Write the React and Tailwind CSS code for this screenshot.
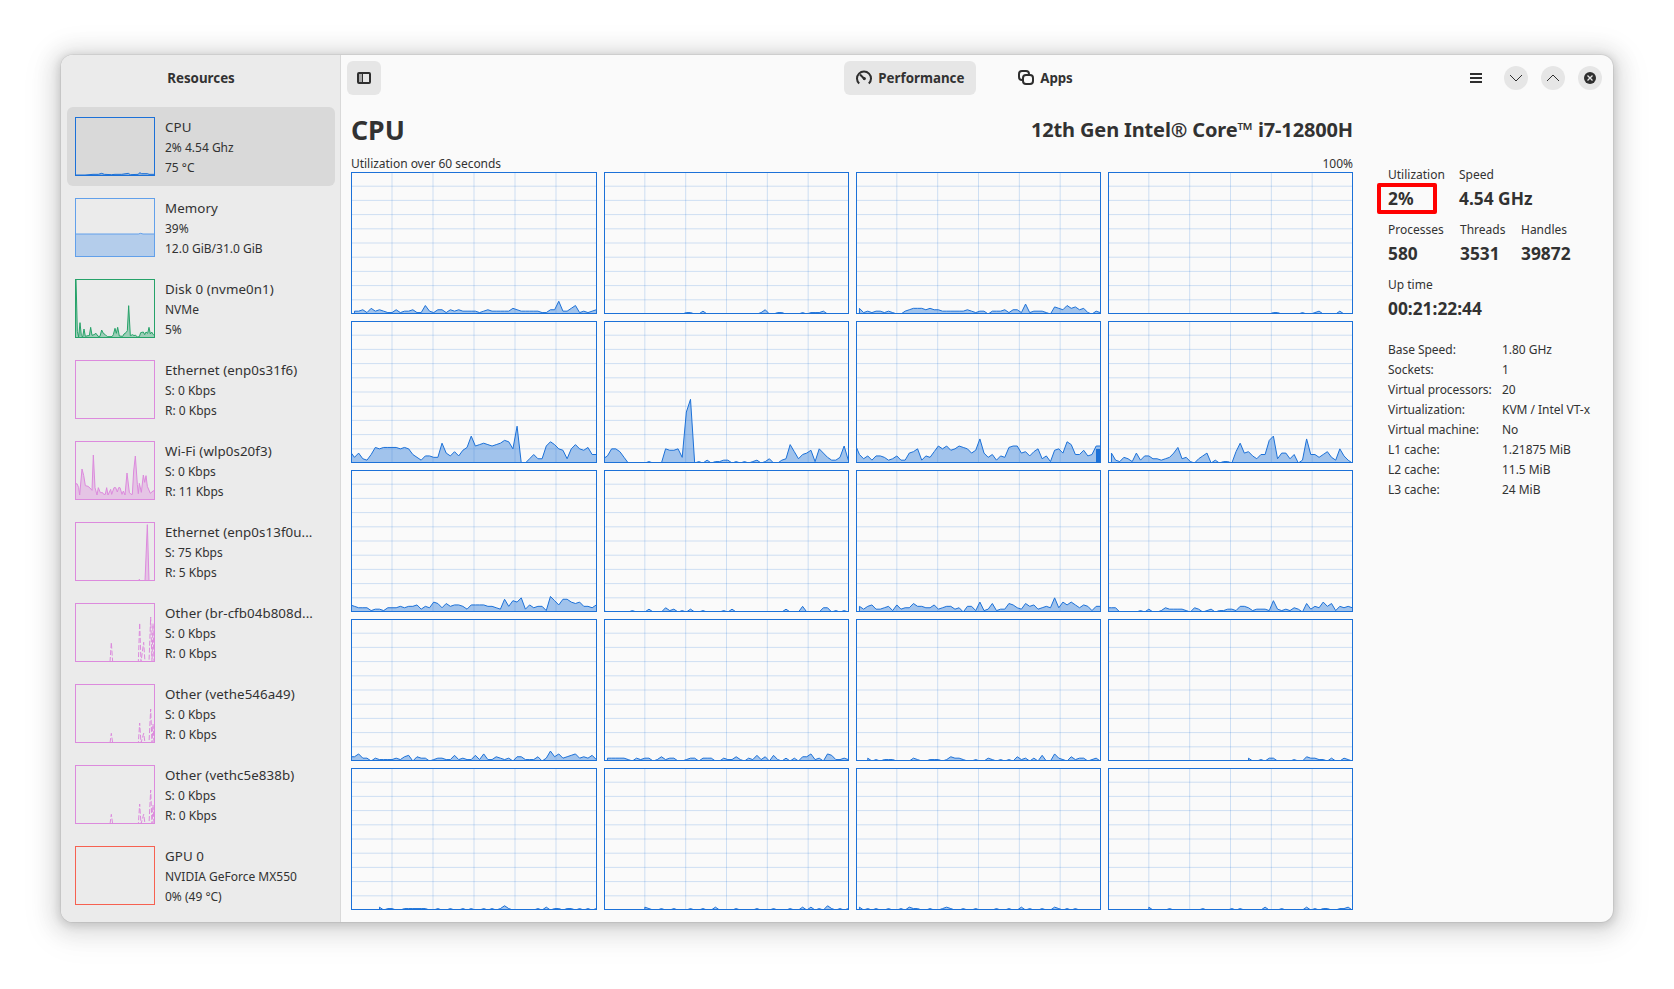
import React from "react";

const CORES = [
  [null,2,2,3,1,4,2,3,2,1,1,3,1,2,2,3,1,1,6,2,1,3,3,1,3,2,3,2,2,2,2,1,2,3,2,2,2,2,2,4,3,2,2,2,2,2,1,1,3,3,9,2,2,4,6,1,2,1,2,3],
  [0,0,0,0,0,0,0,0,0,0,0,0,0,0,0,0,0,0,0,0,1,1,0,0,2,0,0,0,0,0,0,0,0,0,0,0,0,0,1,3,0,0,1,1,0,0,0,0,1,0,1,1,1,2,0,0,0,0,0,0],
  [null,4,1,2,1,2,2,1,2,1,0,0,2,3,4,4,4,3,4,3,3,2,2,2,2,2,2,3,2,1,2,2,0,2,2,2,3,1,3,3,1,7,1,2,2,2,1,0,5,4,3,6,4,5,3,4,1,0,2,1],
  [0,0,0,0,0,0,0,0,0,0,0,0,0,0,0,0,0,0,0,0,0,0,0,0,0,0,0,0,0,0,0,0,0,0,0,0,0,0,0,0,1,1,0,0,0,0,0,1,0,0,1,2,0,0,0,0,2,0,0,0],
  [8,4,7,3,2,6,11,10,11,11,11,11,10,11,10,6,4,2,5,5,4,4,14,7,5,8,5,9,11,19,12,13,14,13,12,13,14,16,15,10,26,0,0,3,6,3,3,12,15,13,10,9,3,10,13,10,9,11,6,6],
  [3,5,10,10,8,4,0,0,0,0,0,1,0,0,0,10,9,9,10,4,36,45,0,1,0,2,0,1,1,2,2,0,1,0,1,0,1,2,0,1,3,0,0,2,3,13,8,3,6,7,9,1,10,7,4,2,2,4,12,2],
  [13,6,3,5,2,5,5,4,2,3,5,2,2,7,8,10,2,5,4,8,12,10,12,9,10,12,11,10,7,9,17,7,4,6,2,5,4,11,12,12,7,8,5,8,10,3,5,1,9,10,7,15,13,6,6,9,5,6,12,12],
  [null,7,2,1,4,3,1,7,2,5,5,3,3,2,3,4,7,11,3,4,1,0,3,5,7,0,2,0,1,1,0,8,14,7,8,5,3,6,6,16,19,3,7,7,3,6,0,2,17,6,6,4,6,8,4,2,10,5,2,0],
  [5,4,3,3,3,1,2,2,1,3,3,3,4,3,4,4,5,2,4,3,7,6,3,6,4,5,5,4,2,5,5,5,5,4,4,3,2,9,4,8,7,10,2,5,3,4,4,1,11,8,5,9,9,7,6,7,4,4,3,5],
  [1,0,0,0,0,0,0,1,0,0,0,2,0,0,0,3,1,2,0,1,0,2,0,0,1,0,0,0,0,1,0,2,0,0,0,0,0,0,0,0,0,0,0,0,2,0,0,0,4,0,0,0,0,3,3,0,1,0,1,0],
  [null,4,2,4,5,2,2,3,4,1,5,2,3,3,6,4,4,3,3,5,2,3,4,4,2,3,0,4,4,1,7,1,2,6,1,2,2,6,5,3,2,6,4,5,2,3,4,3,10,3,7,5,7,5,3,5,4,1,4,4],
  [3,3,3,0,0,0,0,0,1,0,2,0,0,1,3,2,2,2,2,1,0,3,2,0,1,2,0,1,1,2,2,1,4,4,3,1,2,2,2,1,8,2,1,2,1,3,2,0,6,2,4,3,7,4,6,1,4,3,4,3],
  [3,3,5,2,2,0,2,1,1,1,1,2,1,3,4,0,3,2,2,0,1,2,2,1,1,4,1,2,1,1,4,1,5,1,1,3,2,1,2,0,3,3,1,1,1,3,0,2,7,3,5,2,3,4,5,2,3,2,4,1],
  [null,2,2,2,2,2,1,0,2,1,2,2,0,1,3,1,2,2,0,0,1,2,2,0,2,2,2,0,0,2,1,1,3,1,0,2,1,4,1,3,0,4,1,0,2,0,2,0,3,3,5,1,2,0,5,4,1,1,2,1],
  [null,null,null,2,0,1,0,1,1,1,0,0,0,0,2,1,0,0,1,1,1,0,1,3,2,2,1,0,0,1,0,0,2,1,0,1,0,1,0,3,1,2,0,2,0,4,0,0,5,2,1,0,3,1,2,2,0,1,2,0],
  [...Array(34).fill(null),2,0,0,1,0,2,2,0,0,0,0,1,0,0,3,2,2,1,1,0,2,0,0,2,1,0],
  [...Array(7).fill(null),2,0,1,1,0,0,1,1,1,1,1,1,0,0,1,0,0,1,0,0,1,0,1,0,0,1,0,0,0,1,0,1,3,1,0,0,0,0,0,0,1,0,2,0,1,1,0,1,1,0,1,0,1].toSpliced(33, 2).concat([0,1]),
  [...Array(10).fill(null),2,1,0,0,1,0,0,1,0,0,0,1,0,0,1,0,0,2,0,0,0,0,1,0,0,0,0,1,0,0,0,1,0,0,0,1,0,0,2,0,2,0,1,0,3,1,0,1,0,1],
  [null,2,0,1,0,1,0,0,1,0,0,1,0,2,1,1,0,0,1,0,0,1,2,1,0,0,1,0,0,1,0,0,0,0,1,0,0,1,0,0,2,0,1,0,0,1,0,0,2,1,0,1,0,1,0,0,0,0,0,0],
  [...Array(10).fill(null),2,0,0,0,0,1,0,0,0,0,0,0,0,1,0,0,0,0,0,0,1,0,1,0,0,0,0,0,2,0,0,0,1,0,0,0,0,0,2,0,1,0,1,1,0,0,1,1,2,0],
];

const WIFI = "0,130 6,128 11,140 14,162 21,84 26,103 31,134 39,136 45,141 51,148 55,42 60,140 66,162 70,140 76,155 83,155 86,160 91,160 95,140 99,162 107,145 110,160 117,140 122,140 127,153 131,140 135,140 141,160 145,150 150,162 156,96 163,154 168,160 172,160 176,90 181,45 187,130 190,158 193,127 199,154 205,102 209,124 213,104 217,136 226,157 234,150 240,148";
const DISK = "0,0 3,0 7,157 11,174 15,131 19,170 23,174 27,150 31,172 39,170 43,170 47,145 51,169 57,167 63,163 69,172 75,172 80,153 85,163 91,167 97,173 111,173 115,167 120,148 124,163 128,145 133,171 143,172 147,165 153,161 157,155 161,80 166,170 173,167 177,170 181,168 187,174 193,173 197,161 205,159 209,167 213,159 218,163 222,145 226,165 230,159 235,167 240,169";
const USAGE = "0,174 30,174 54,172 70,172 80,169 88,172 110,173 120,172 140,172 160,169 166,173 190,172 194,167 200,170 218,170 222,172 240,172";
const BRIDGE = "105,177 109,118 113,177 190,177 194,60 198,177 206,118 210,177 222,177 227,42 231,177 234,62 237,177";
const VETH = "105,177 109,148 113,177 190,177 194,117 198,177 206,148 210,177 222,177 227,75 231,177 234,120 237,177";

const DEVICES = [
  { name: "CPU", lines: ["2% 4.54 Ghz", "75 °C"], color: "#1c71d8", points: USAGE, selected: true },
  { name: "Memory", lines: ["39%", "12.0 GiB/31.0 GiB"], color: "#62a0ea", points: "0,108 190,108 197,106 204,108 240,108" },
  { name: "Disk 0 (nvme0n1)", lines: ["NVMe", "5%"], color: "#26a269", points: DISK },
  { name: "Ethernet (enp0s31f6)", lines: ["S: 0 Kbps", "R: 0 Kbps"], color: "#dc8add" },
  { name: "Wi-Fi (wlp0s20f3)", lines: ["S: 0 Kbps", "R: 11 Kbps"], color: "#dc8add", points: WIFI },
  { name: "Ethernet (enp0s13f0u...", lines: ["S: 75 Kbps", "R: 5 Kbps"], color: "#dc8add", points: "189,177 193,172 197,177 210,177 217,8 222,177" },
  { name: "Other (br-cfb04b808d...", lines: ["S: 0 Kbps", "R: 0 Kbps"], color: "#dc8add", points: BRIDGE, dashed: true },
  { name: "Other (vethe546a49)", lines: ["S: 0 Kbps", "R: 0 Kbps"], color: "#dc8add", points: VETH, dashed: true },
  { name: "Other (vethc5e838b)", lines: ["S: 0 Kbps", "R: 0 Kbps"], color: "#dc8add", points: VETH, dashed: true },
  { name: "GPU 0", lines: ["NVIDIA GeForce MX550", "0% (49 °C)"], color: "#f66151" },
];

function Thumbnail({ color, points, dashed }) {
  return (
    <svg className="h-[59px] w-20 shrink-0" viewBox="0 0 240 177">
      {points && !dashed && (
        <polygon points={`${points.split(" ")[0].split(",")[0]},177 ${points} ${points.split(" ").at(-1).split(",")[0]},177`} fill={color} fillOpacity="0.4" />
      )}
      {points && (
        <polyline points={points} fill="none" stroke={color} strokeWidth="3" strokeDasharray={dashed ? "15 6" : undefined} />
      )}
      <rect x="1.5" y="1.5" width="237" height="174" fill="none" stroke={color} strokeWidth="3" />
    </svg>
  );
}

function Device({ device }) {
  return (
    <li className={`flex h-[79px] items-center gap-2.5 rounded-md pl-2 ${device.selected ? "bg-[#d9d9d9]" : ""}`}>
      <Thumbnail {...device} />
      <div className="pt-0.5 text-xs leading-5 whitespace-nowrap">
        <div className="h-[21px] text-[13.33px] tracking-[0.07px]">{device.name}</div>
        {device.lines.map((line) => (
          <div key={line}>{line}</div>
        ))}
      </div>
    </li>
  );
}

function CoreGraph({ values, width, marker }) {
  const height = 142;
  const first = values.findIndex((v) => v !== null);
  const x = (k) => ((k * width) / 59 - 0.7).toFixed(2);
  const y = (v) => (height - v * 1.415).toFixed(2);
  const line = values.slice(first).map((v, i) => `${x(i + first)},${y(v)}`).join(" ");
  const shape = `${x(first)},${height} ${line} ${width},${y(values[59])} ${width},${height}`;
  return (
    <svg className="block h-[142px] w-full" viewBox={`0 0 ${width} ${height}`}>
      <g stroke="#1c71d8" strokeOpacity="0.2">
        {[1, 2, 3, 4, 5].map((i) => (
          <line key={i} x1={(i * width) / 6} x2={(i * width) / 6} y1="0" y2={height} />
        ))}
        {[1, 2, 3, 4, 5, 6, 7, 8, 9].map((i) => (
          <line key={i} x1="0" x2={width} y1={(i * height) / 10} y2={(i * height) / 10} />
        ))}
      </g>
      <polygon points={shape} fill="#1c71d8" fillOpacity="0.4" stroke="#1c71d8" />
      {marker && <rect x={width - 5} y="128" width="5" height="14" fill="#1c71d8" />}
      <rect x="0.5" y="0.5" width={width - 1} height={height - 1} fill="none" stroke="#1c71d8" />
    </svg>
  );
}

function Stat({ label, value, className }) {
  return (
    <div className={className}>
      <div className="pt-px text-xs leading-5">{label}</div>
      <div className="text-[17.33px] leading-[26px] font-bold">{value}</div>
    </div>
  );
}

function RoundButton({ label, children }) {
  return (
    <button aria-label={label} className="flex size-6 items-center justify-center rounded-full bg-[#e6e6e6]">
      <svg className="size-4" viewBox="0 0 16 16" fill="none" stroke="#2e2e2e">{children}</svg>
    </button>
  );
}

const DETAILS = [
  ["Base Speed:", "1.80 GHz"],
  ["Sockets:", "1"],
  ["Virtual processors:", "20"],
  ["Virtualization:", "KVM / Intel VT-x"],
  ["Virtual machine:", "No"],
  ["L1 cache:", "1.21875 MiB"],
  ["L2 cache:", "11.5 MiB"],
  ["L3 cache:", "24 MiB"],
];

export default function App() {
  return (
    <div className="h-[989px] w-[1674px] overflow-hidden bg-white pt-[55px] pl-[61px] font-['Noto_Sans',sans-serif] text-[#323232]">
      <div className="flex h-[867px] w-[1552px] overflow-hidden rounded-xl bg-[#fafafa] shadow-[0_2px_8px_2px_rgb(0_0_0/0.13),0_3px_20px_10px_rgb(0_0_0/0.09),0_6px_32px_16px_rgb(0_0_0/0.04),0_0_0_1px_rgb(0_0_0/0.05)]">
        <aside className="w-[280px] shrink-0 border-r border-[#d9d9d9] bg-[#ebebeb]">
          <h2 className="h-[46px] pt-px pl-px text-center text-[13.33px] leading-[45px] font-bold">Resources</h2>
          <ul className="flex flex-col gap-0.5 pt-1.5 pr-[5px] pl-1.5">
            {DEVICES.map((device) => (
              <Device key={device.name} device={device} />
            ))}
          </ul>
        </aside>

        <main className="flex min-w-0 flex-1 flex-col">
          <header className="grid h-[46px] grid-cols-[1fr_auto_1fr] items-center pr-[11px] pl-1.5">
            <button aria-label="Toggle sidebar" className="flex size-[34px] items-center justify-center rounded-md bg-[#e6e6e6]">
              <svg className="size-4" viewBox="0 0 16 16">
                <rect x="2" y="3" width="4" height="10" fill="#a9a9a9" />
                <path d="M6.5 3v10" stroke="#2e2e2e" />
                <rect x="2" y="3" width="12" height="10" rx="1" fill="none" stroke="#2e2e2e" strokeWidth="2" />
              </svg>
            </button>
            <nav className="flex gap-[30px] pr-8 text-[13.33px] font-bold">
              <button className="flex h-[34px] w-[132px] items-center gap-1.5 rounded-md bg-[#e6e6e6] pl-3">
                <svg className="size-4" viewBox="0 0 16 16" fill="none" stroke="#2e2e2e" strokeWidth="2">
                  <path d="M3.2 13.6A7 7 0 1 1 12.8 13.6" />
                  <path d="M4 4.5 8 8.5" />
                  <circle cx="8.3" cy="8.6" r="1.6" fill="#2e2e2e" stroke="none" />
                </svg>
                <span className="pt-0.5">Performance</span>
              </button>
              <button className="flex h-[34px] items-center gap-1.5 pl-3">
                <svg className="size-4" viewBox="0 0 16 16" fill="none" stroke="#2e2e2e" strokeWidth="2">
                  <path d="M5 10H4a3 3 0 0 1-3-3V4a3 3 0 0 1 3-3h4a3 3 0 0 1 3 3v1" />
                  <rect x="5" y="5" width="10" height="9" rx="3" />
                </svg>
                <span className="pt-0.5 tracking-[-0.1px]">Apps</span>
              </button>
            </nav>
            <div className="flex items-center justify-end gap-[13px]">
              <button aria-label="Menu" className="mr-[3px] flex size-6 items-center justify-center">
                <svg className="size-4" viewBox="0 0 16 16" fill="#2e2e2e">
                  <path d="M2 3h12v2H2zM2 7h12v2H2zM2 11h12v2H2z" />
                </svg>
              </button>
              <RoundButton label="Minimize"><path d="m2 5 6 6 6-6" /></RoundButton>
              <RoundButton label="Maximize"><path d="m2 11 6-6 6 6" /></RoundButton>
              <RoundButton label="Close">
                <circle cx="8" cy="8" r="6" fill="#2e2e2e" stroke="none" />
                <path d="m5.5 5.5 5 5m0-5-5 5" stroke="#e6e6e6" strokeWidth="1.3" />
              </RoundButton>
            </div>
          </header>

          <div className="flex flex-1">
            <section className="w-[1012px] pl-2.5">
              <div className="flex h-[54px] items-center justify-between pt-1">
                <h1 className="text-[26.67px] font-bold">CPU</h1>
                <h2 className="text-[20px] font-bold tracking-[-0.14px]">12th Gen Intel® Core™ i7-12800H</h2>
              </div>
              <div className="flex h-[17px] justify-between text-xs leading-[17px]">
                <span className="tracking-[-0.03px]">Utilization over 60 seconds</span>
                <span>100%</span>
              </div>
              <div className="grid grid-cols-[246px_245px_245px_245px] gap-[7px]">
                {CORES.map((values, i) => (
                  <CoreGraph key={i} values={values} width={i % 4 === 0 ? 246 : 245} marker={i === 6} />
                ))}
              </div>
            </section>

            <aside className="flex-1 pt-[63px] pl-[35px]">
              <div className="flex flex-col gap-2">
                <div className="flex">
                  <div className="relative w-[71px]">
                    <Stat label="Utilization" value="2%" />
                    <div className="absolute top-[19px] -left-[11px] h-[31px] w-[60px] rounded-xs border-4 border-[#ff0000]" />
                  </div>
                  <Stat label="Speed" value="4.54 GHz" />
                </div>
                <div className="flex">
                  <Stat label="Processes" value="580" className="w-[72px]" />
                  <Stat label="Threads" value="3531" className="w-[61px]" />
                  <Stat label="Handles" value="39872" />
                </div>
                <Stat label="Up time" value="00:21:22:44" />
              </div>
              <dl className="grid grid-cols-[114px_auto] pt-[19px] text-xs leading-5 tracking-[-0.04px]">
                {DETAILS.map(([term, value]) => (
                  <React.Fragment key={term}>
                    <dt>{term}</dt>
                    <dd>{value}</dd>
                  </React.Fragment>
                ))}
              </dl>
            </aside>
          </div>
        </main>
      </div>
    </div>
  );
}
